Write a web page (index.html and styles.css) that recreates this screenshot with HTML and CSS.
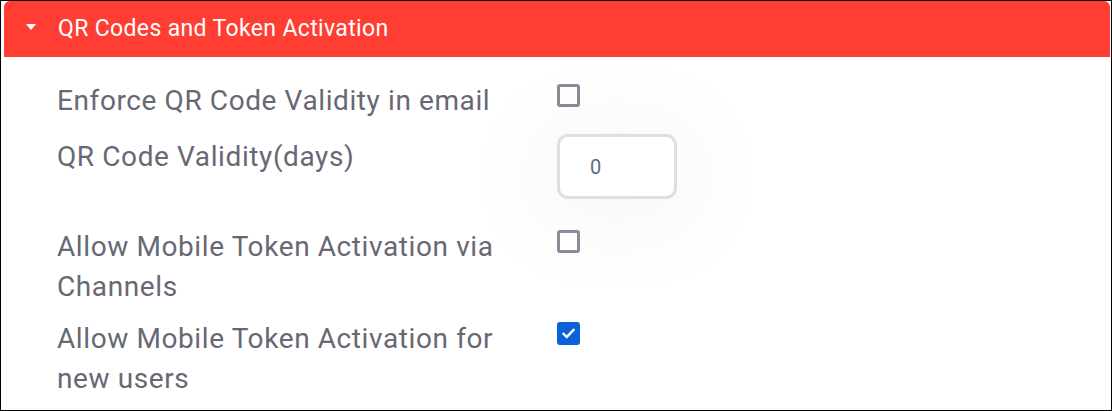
FILE: index.html
```html
<!DOCTYPE html>
<html lang="en">
<head>
<meta charset="utf-8">
<title>QR Codes and Token Activation</title>
<link rel="stylesheet" href="styles.css">
</head>
<body>
<div class="frame">
  <section class="panel">
    <header class="panel-head">
      <span class="caret"></span>
      <span class="panel-title">QR Codes and Token Activation</span>
    </header>
    <div class="panel-body">
      <div class="row">
        <label class="label" for="c1">Enforce QR Code Validity in email</label>
        <div class="control"><span class="check" id="c1"></span></div>
      </div>
      <div class="row row-input">
        <label class="label" for="days">QR Code Validity(days)</label>
        <div class="control"><div class="num-input" id="days">0</div></div>
      </div>
      <div class="row">
        <label class="label" for="c3">Allow Mobile Token Activation via Channels</label>
        <div class="control"><span class="check" id="c3"></span></div>
      </div>
      <div class="row">
        <label class="label" for="c4">Allow Mobile Token Activation for new users</label>
        <div class="control"><span class="check checked" id="c4">
          <svg viewBox="0 0 24 24" width="17" height="17"><path d="M5 12.5l4.5 4.5L19 7" fill="none" stroke="#fff" stroke-width="3.4" stroke-linecap="square"/></svg>
        </span></div>
      </div>
    </div>
  </section>
</div>
</body>
</html>
```

FILE: styles.css
```css
* { box-sizing: border-box; }
html, body { margin: 0; padding: 0; background: #fff; }
.frame {
  width: 1112px;
  height: 411px;
  border: 1px solid #000;
  padding: 0 1px 0 3px;
  overflow: hidden;
  font-family: Roboto, "Liberation Sans", Arial, sans-serif;
}
.panel { background: #fff; }
.panel-head {
  height: 56px;
  background: #ff3d33;
  border-radius: 6px 6px 0 0;
  display: flex;
  align-items: center;
  color: #fff;
}
.caret {
  width: 0;
  height: 0;
  margin-left: 22px;
  margin-right: 22px;
  margin-top: -4px;
  border-left: 5px solid transparent;
  border-right: 5px solid transparent;
  border-top: 6px solid #fff;
}
.panel-title {
  font-size: 23px;
  letter-spacing: 0.35px;
  margin-top: -2px;
}
.panel-body {
  padding: 24px 0 0 53px;
  display: flex;
  flex-direction: column;
  gap: 12px;
}
.row {
  display: grid;
  grid-template-columns: 500px auto;
  align-items: start;
}
.row-input { margin-bottom: 16px; }
.label {
  font-size: 28px;
  line-height: 40px;
  letter-spacing: 0.6px;
  color: #686874;
  max-width: 470px;
}
.row-input .label { padding-top: 4px; }
.control { padding-top: 3px; }
.row-input .control { padding-top: 1px; }
.check {
  display: flex;
  align-items: center;
  justify-content: center;
  width: 23px;
  height: 23px;
  border: 3px solid #8b8a98;
  border-radius: 3px;
  background: #fff;
}
.check.checked {
  background: #0b62d8;
  border-color: #0b62d8;
}
.num-input {
  width: 120px;
  height: 65px;
  border: 3px solid #dcdfe3;
  border-radius: 11px;
  background: #fff;
  font-size: 20px;
  color: #5c6a80;
  display: flex;
  align-items: center;
  padding-left: 30px;
  box-shadow: 0 10px 90px 30px rgba(0, 0, 0, 0.03);
}
```
